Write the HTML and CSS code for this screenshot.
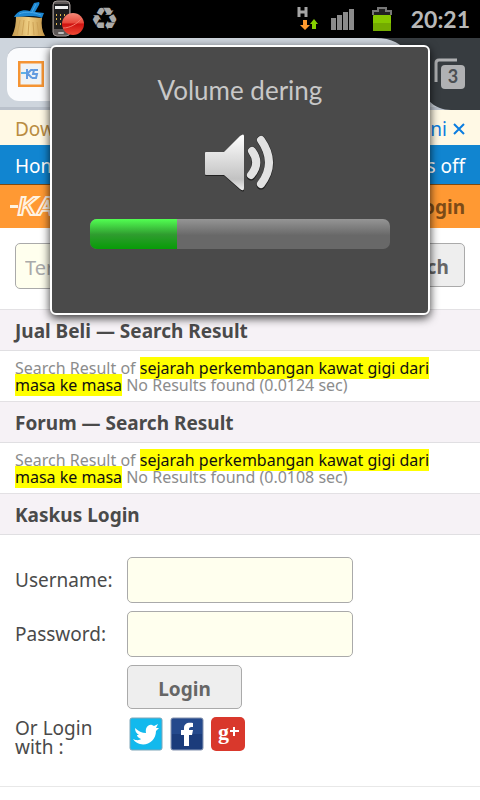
FILE: index.html
```html
<!DOCTYPE html>
<html lang="id">
<head>
    <meta charset="UTF-8">
    <meta name="viewport" content="width=device-width, initial-scale=1.0">
    <title>Kaskus - Search Result</title>
    <link rel="stylesheet" href="styles.css">
</head>
<body>
    <div class="status-bar">
        <svg class="icon-broom" width="34" height="38" viewBox="0 0 34 38">
            <defs>
                <linearGradient id="straw" x1="0" y1="0" x2="1" y2="0">
                    <stop offset="0" stop-color="#c39a50"/>
                    <stop offset="0.5" stop-color="#f0cf83"/>
                    <stop offset="1" stop-color="#c39548"/>
                </linearGradient>
            </defs>
            <path d="M5 16 L31 18 C30 25 31 31 34 36 H1 C4 30 5 23 5 16Z" fill="url(#straw)"/>
            <path d="M9 20 L6 35 M13 20 L11 35 M18 21 L17 35 M22 22 L23 35 M26 22 L28 35" stroke="#cda256" stroke-width="1"/>
            <path d="M23 3 L28 2 Q29 3 28 5 L24 12 L33 13 L31 18 C22 15 14 17 3 17 C6 12 11 9 19 11Z" fill="#1c87d2"/>
            <path d="M25 4 L21 12 M8 14 C15 11 22 12 30 15" stroke="#4aa9e8" stroke-width="1" fill="none"/>
        </svg>
        <svg class="icon-recorder" width="34" height="38" viewBox="0 0 34 38">
            <defs>
                <linearGradient id="record" x1="0" y1="0" x2="0" y2="1">
                    <stop offset="0" stop-color="#f58a78"/>
                    <stop offset="0.45" stop-color="#e8483a"/>
                    <stop offset="0.5" stop-color="#cf1210"/>
                    <stop offset="1" stop-color="#f04a35"/>
                </linearGradient>
            </defs>
            <rect x="1" y="1" width="17" height="35" rx="4" fill="#5e5857" stroke="#a39b99"/>
            <rect x="2" y="4" width="15" height="25" fill="#1c1c1e"/>
            <rect x="3" y="6" width="13" height="3" fill="#eee"/>
            <path d="M4 15h1M8 15h1M12 15h1M4 19h1M8 19h1M4 24h1M8 24h1" stroke="#ddb34c" stroke-width="2"/>
            <rect x="6" y="32" width="6" height="2" rx="1" fill="#bbb"/>
            <circle cx="21" cy="24" r="11" fill="url(#record)"/>
            <path d="M11 28 C18 28 25 24 30 18" stroke="#f47a6b" stroke-width="1" fill="none"/>
        </svg>
        <span class="recycle">&#9851;</span>
        <svg class="icon-data" width="22" height="26" viewBox="0 0 22 26">
            <path d="M2 1v10M9 1v10M2 6h7" stroke="#a5a5a5" stroke-width="3"/>
            <path d="M6 14h4v5h3l-5 5-5-5h3z" fill="#ff9a2e"/>
            <path d="M15 23h4v-5h2l-4-5-4 5h2z" fill="#86d000"/>
        </svg>
        <svg class="icon-signal" width="24" height="22" viewBox="0 0 24 22">
            <path d="M0 10h5v12H0zM6 7h5v15H6zM12 4h5v18h-5zM18 1h5v21h-5z" fill="#8b8b8b"/>
        </svg>
        <svg class="icon-battery" width="20" height="25" viewBox="0 0 20 25">
            <path d="M1 8V4h5V1h8v3h5v4" fill="#222" stroke="#777" stroke-width="2"/>
            <rect x="1" y="8" width="18" height="16" rx="1" fill="#86c800"/>
            <rect x="1" y="16" width="18" height="8" rx="1" fill="#74ab00"/>
        </svg>
        <span class="clock">20:21</span>
    </div>

    <div class="browser-bar">
        <div class="url-box">
            <svg width="26" height="26" viewBox="0 0 26 26">
                <rect x="1" y="1" width="24" height="24" fill="#f0f3f5" stroke="#f59433" stroke-width="3"/>
                <path d="M3 12h5" stroke="#5db2e8" stroke-width="2"/>
                <path d="M9 8v10M9 13l4-4h2M10 13l4 4M20 9h-4l-1 4h4l-1 4h-4" stroke="#629be0" stroke-width="2" fill="none"/>
            </svg>
        </div>
        <div class="tab-area">
            <svg width="105" height="72" viewBox="0 0 105 72">
                <path d="M0 0C18 0 26 6 34 16C42 30 44 50 54 63C60 69 68 72 76 72H105V0Z" fill="#373c40"/>
                <path d="M61 44V25q0-3 3-3h18" stroke="#b0b1b3" stroke-width="3" fill="none"/>
                <rect x="66" y="27" width="24" height="24" rx="4" fill="#b0b1b3"/>
                <text x="78" y="45" class="tab-count">3</text>
            </svg>
        </div>
    </div>

    <div class="notice">
        <span>Download</span>
        <a href="#">di sini <svg width="12" height="12" viewBox="0 0 12 12"><path d="M1 1L11 11M11 1L1 11" stroke="#0b7de0" stroke-width="2"/></svg></a>
    </div>
    <div class="top-nav">
        <a href="#">Home</a>
        <a href="#">Images off</a>
    </div>
    <div class="brand-bar">
        <a href="#" class="logo">KASKUS</a>
        <a href="#" class="login-link">Login</a>
    </div>

    <form class="search-form">
        <input type="text" placeholder="Term" aria-label="Search term">
        <button type="button">Search</button>
    </form>

    <h2>Jual Beli — Search Result</h2>
    <p class="result">Search Result of <mark>sejarah perkembangan kawat gigi dari masa ke masa</mark> No Results found (0.0124 sec)</p>

    <h2>Forum — Search Result</h2>
    <p class="result">Search Result of <mark>sejarah perkembangan kawat gigi dari masa ke masa</mark> No Results found (0.0108 sec)</p>

    <h2>Kaskus Login</h2>
    <form class="login-form">
        <label for="username">Username:</label>
        <input type="text" id="username">
        <label for="password">Password:</label>
        <input type="password" id="password">
        <button type="button">Login</button>
        <span class="social-label">Or Login with :</span>
        <div class="social">
            <a href="#" aria-label="Twitter">
                <svg width="34" height="34" viewBox="0 0 34 34">
                    <rect x="1" y="1" width="32" height="32" rx="2" fill="#12b9ed" stroke="#7fa6b8"/>
                    <path d="M4 22C8 24 11 23 12 22C9 21 8 19 8 18H10C7 16 6 14 6 11C9 14 13 16 17 16C16 11 19 7 23 8L25 9L29 7L27 11L30 11L27 14C27 23 19 29 11 27C8 26 6 25 4 22Z" fill="#fff"/>
                </svg>
            </a>
            <a href="#" aria-label="Facebook">
                <svg width="34" height="34" viewBox="0 0 34 34">
                    <rect x="1" y="1" width="32" height="32" rx="2" fill="#24498c" stroke="#8492ad"/>
                    <rect x="2" y="17" width="30" height="15" fill="#1b3c7b"/>
                    <path d="M14 29V18H11V13H14V11C14 7 17 5 23 6V10C20 10 19 10 19 13H23L22 18H19V29Z" fill="#fff"/>
                </svg>
            </a>
            <a href="#" aria-label="Google+">
                <svg width="34" height="34" viewBox="0 0 34 34">
                    <rect width="34" height="34" rx="5" fill="#d9382c"/>
                    <text x="7" y="22" class="gplus-text">g</text>
                    <path d="M19 14h9M23 10v9" stroke="#fff" stroke-width="2"/>
                </svg>
            </a>
        </div>
    </form>

    <div class="volume-dialog">
        <div class="volume-title">Volume dering</div>
        <svg width="72" height="60" viewBox="0 0 72 60">
            <defs>
                <linearGradient id="metal" x1="0" y1="0" x2="0" y2="1">
                    <stop offset="0" stop-color="#fff"/>
                    <stop offset="0.8" stop-color="#c2c2c2"/>
                    <stop offset="1" stop-color="#f0f0f0"/>
                </linearGradient>
            </defs>
            <path d="M2 20H20L36 4Q40 0 40 4V57Q40 60 36 57L20 43H2Q1 43 1 42V21Q1 20 2 20Z" fill="#222"/>
            <path d="M2 19H20L36 3Q40 0 40 3V55Q40 59 36 56L20 42H2Q1 42 1 41V20Q1 19 2 19Z" fill="url(#metal)"/>
            <path d="M48 18Q57 30 47 43M57 7Q73 30 57 52" stroke="#222" stroke-width="9" stroke-linecap="round" fill="none"/>
            <path d="M48 18Q57 30 47 42M57 7Q73 30 57 51" stroke="#e2e2e2" stroke-width="8" stroke-linecap="round" fill="none"/>
        </svg>
        <div class="volume-track">
            <div class="volume-level" style="width: 29%"></div>
        </div>
    </div>
</body>
</html>
```
FILE: styles.css
```css
* {
    box-sizing: border-box;
}

body {
    margin: 0;
    position: relative;
    background: #fff;
    color: #4a4a4a;
    font-family: "Noto Sans", "Open Sans", sans-serif;
    font-size: 19px;
}

a {
    text-decoration: none;
}

svg {
    display: block;
}

/* phone status bar */
.status-bar {
    display: flex;
    align-items: center;
    height: 38px;
    padding: 0 10px 0 11px;
    background: #000;
    color: #b8b8b8;
}

.icon-recorder {
    margin-left: 7px;
}

.recycle {
    margin-left: 4px;
    margin-right: auto;
    font-family: "DejaVu Sans", sans-serif;
    font-size: 32px;
    line-height: 38px;
    color: #aaa;
}

.icon-signal {
    margin-left: 12px;
}

.icon-battery {
    margin-left: 17px;
}

.clock {
    width: 60px;
    margin-left: 18px;
    font-family: Lato, sans-serif;
    font-size: 23px;
    font-weight: bold;
    text-align: right;
}

/* browser toolbar */
.browser-bar {
    display: flex;
    height: 72px;
    background: linear-gradient(#ced5dd 69px, #bac1cb 69px);
}

.url-box {
    flex: 1;
    height: 54px;
    margin: 9px 0 0 7px;
    padding: 13px 11px;
    border-top: 1px solid #aab1ba;
    border-radius: 12px;
    background: #fafbfd;
}

.tab-count {
    font: bold 18px Lato, sans-serif;
    fill: #4b4f53;
    text-anchor: middle;
}

/* site header */
.notice,
.top-nav,
.brand-bar {
    display: flex;
    justify-content: space-between;
    align-items: center;
    padding: 0 15px;
}

.notice {
    height: 35px;
    padding-top: 2px;
    background: #fff9e5;
    color: #b98c42;
}

.notice a {
    display: flex;
    align-items: center;
    gap: 6px;
    color: #0b7de0;
}

.top-nav {
    height: 40px;
    padding-top: 2px;
    background: #1185d0;
    border-bottom: 1px solid #7c4a12;
}

.top-nav a {
    color: #fff;
}

.brand-bar {
    height: 43px;
    padding-left: 10px;
    background: #ff9933;
}

.logo {
    display: flex;
    align-items: center;
    font-family: "Liberation Sans", sans-serif;
    font-size: 26px;
    font-weight: bold;
    font-style: italic;
    color: #ff9933;
    -webkit-text-stroke: 2px #fff3e2;
}

.logo::before {
    content: "";
    width: 8px;
    height: 3px;
    background: #fff3e2;
}

.login-link {
    font-weight: bold;
    color: #7d4b17;
}

/* forms */
input,
button {
    border: 1px solid #aaa;
    border-radius: 5px;
    font-family: inherit;
    font-size: 20px;
}

input {
    height: 46px;
    padding: 2px 9px 0;
    background: #ffffee;
}

input::placeholder {
    color: #aaa;
}

button {
    height: 44px;
    padding-top: 4px;
    background: #eee;
    color: #666;
    font-size: 19px;
    font-weight: bold;
}

.search-form {
    display: flex;
    gap: 10px;
    padding: 15px 15px 20px;
}

.search-form input {
    flex: 1;
    min-width: 0;
}

.search-form button {
    width: 96px;
}

/* results */
h2 {
    margin: 0;
    padding: 2px 15px 0;
    border-top: 1px solid #e3e1e4;
    border-bottom: 1px solid #e0dfe2;
    background: #f6f2f6;
    font-size: 19px;
    line-height: 38px;
}

.result {
    margin: 0;
    padding: 9px 15px 7px;
    color: #8c8c8c;
    font-size: 16px;
    line-height: 17px;
}

mark {
    background: #ff0;
    color: #111;
}

/* login */
.login-form {
    display: grid;
    grid-template-columns: 112px 1fr;
    align-items: center;
    gap: 8px 0;
    padding: 22px 15px 29px;
    border-bottom: 1px solid #e8e8e8;
}

.login-form input {
    width: 226px;
}

.login-form button {
    grid-column: 2;
    width: 115px;
}

.social-label {
    padding-top: 2px;
    padding-right: 20px;
    line-height: 19px;
}

.social {
    display: flex;
    align-self: start;
    gap: 7px;
    padding-left: 2px;
}

.gplus-text {
    font: bold 22px "Liberation Serif", serif;
    fill: #fff;
}

/* volume popup */
.volume-dialog {
    position: absolute;
    top: 45px;
    left: 50px;
    right: 50px;
    display: flex;
    flex-direction: column;
    align-items: center;
    padding: 24px 38px 64px;
    border: 2px solid #fff;
    border-radius: 6px;
    background: #4a4a4a;
    box-shadow: 0 3px 10px rgba(0, 0, 0, 0.8);
}

.volume-title {
    margin-bottom: 24px;
    font-family: Lato, sans-serif;
    font-size: 26px;
    line-height: 38px;
    color: #c8c8c8;
}

.volume-track {
    width: 100%;
    height: 30px;
    margin-top: 26px;
    border-radius: 7px;
    overflow: hidden;
    background: linear-gradient(#959595, #686868 55%);
}

.volume-level {
    height: 100%;
    background: linear-gradient(#52ff52, #2f9c2f 52%, #079c07);
}
```
